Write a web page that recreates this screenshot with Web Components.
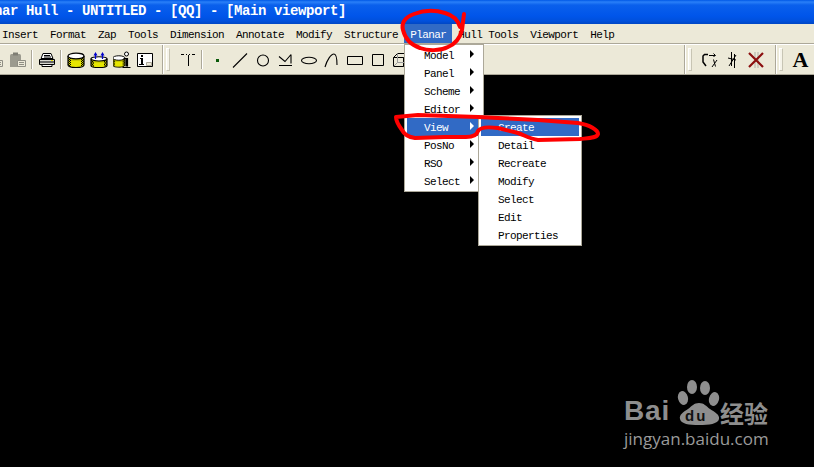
<!DOCTYPE html>
<html>
<head>
<meta charset="utf-8">
<style>
  html, body { margin: 0; height: 100%; background: #000; overflow: hidden; }
  body { font-family: "Liberation Mono", monospace; }
</style>
</head>
<body>
<app-window>
  <title-bar>nar Hull - UNTITLED - [QQ] - [Main viewport]</title-bar>
  <menu-bar>
    <menu-entry>Insert</menu-entry>
    <menu-entry>Format</menu-entry>
    <menu-entry>Zap</menu-entry>
    <menu-entry>Tools</menu-entry>
    <menu-entry>Dimension</menu-entry>
    <menu-entry>Annotate</menu-entry>
    <menu-entry>Modify</menu-entry>
    <menu-entry>Structure</menu-entry>
    <menu-entry active>Planar</menu-entry>
    <menu-entry>Hull Tools</menu-entry>
    <menu-entry>Viewport</menu-entry>
    <menu-entry>Help</menu-entry>
  </menu-bar>
  <tool-bar>
    <tool-icon name="paste"></tool-icon>
    <tool-icon name="paste"></tool-icon>
    <tool-sep></tool-sep>
    <tool-icon name="print"></tool-icon>
    <tool-sep></tool-sep>
    <tool-icon name="db"></tool-icon>
    <tool-icon name="dbarrows"></tool-icon>
    <tool-icon name="dbinfo"></tool-icon>
    <tool-icon name="info"></tool-icon>
    <tool-end style="width:20px"></tool-end>
    <tool-icon name="tee"></tool-icon>
    <tool-sep></tool-sep>
    <tool-icon name="dot"></tool-icon>
    <tool-icon name="line"></tool-icon>
    <tool-icon name="circle"></tool-icon>
    <tool-icon name="check"></tool-icon>
    <tool-icon name="ellipse"></tool-icon>
    <tool-icon name="arc"></tool-icon>
    <tool-icon name="rect"></tool-icon>
    <tool-icon name="square"></tool-icon>
    <tool-icon name="cube"></tool-icon>
    <tool-gap></tool-gap>
    <tool-end style="width:22px"></tool-end>
    <tool-icon name="rotate"></tool-icon>
    <tool-icon name="cross"></tool-icon>
    <tool-icon name="del"></tool-icon>
    <tool-end style="width:22px"></tool-end>
    <tool-icon name="text"></tool-icon>
  </tool-bar>

  <pop-menu style="left:404px;top:44px;width:80px">
    <pop-item arrow>Model</pop-item>
    <pop-item arrow>Panel</pop-item>
    <pop-item arrow>Scheme</pop-item>
    <pop-item arrow>Editor</pop-item>
    <pop-item arrow active>View</pop-item>
    <pop-item arrow>PosNo</pop-item>
    <pop-item arrow>RSO</pop-item>
    <pop-item arrow>Select</pop-item>
  </pop-menu>
  <pop-menu style="left:478px;top:115px;width:104px;padding-top:2px">
    <pop-item active>Create</pop-item>
    <pop-item>Detail</pop-item>
    <pop-item>Recreate</pop-item>
    <pop-item>Modify</pop-item>
    <pop-item>Select</pop-item>
    <pop-item>Edit</pop-item>
    <pop-item>Properties</pop-item>
  </pop-menu>

  <red-scribble></red-scribble>
  <baidu-mark></baidu-mark>
</app-window>

<script>
class AppWindow extends HTMLElement {
  constructor() {
    super();
    this.attachShadow({ mode: "open" });
    this.shadowRoot.innerHTML = `
      <style>
        :host { display: flex; flex-direction: column; position: relative; width: 814px; height: 467px; overflow: hidden; background: #000; }
      </style>
      <slot></slot>`;
  }
}

class TitleBar extends HTMLElement {
  constructor() {
    super();
    this.attachShadow({ mode: "open" });
    this.shadowRoot.innerHTML = `
      <style>
        :host {
          display: block; height: 24px; white-space: nowrap; overflow: hidden;
          text-indent: -6px; color: #fff; font: bold 14px/22px "Liberation Mono", monospace;
          letter-spacing: -.4px;
          background: linear-gradient(#0058e6 0, #2a80f8 2px, #0a60ec 5px, #0055ea 16px, #0050dc 21px, #0046c4 24px);
        }
      </style>
      <slot></slot>`;
  }
}

class MenuBar extends HTMLElement {
  constructor() {
    super();
    this.attachShadow({ mode: "open" });
    this.shadowRoot.innerHTML = `
      <style>
        :host { display: flex; height: 19px; margin-left: -4px; background: #ece9d8; border-bottom: 1px solid #aca899; }
      </style>
      <slot></slot>`;
  }
}

class MenuEntry extends HTMLElement {
  constructor() {
    super();
    this.attachShadow({ mode: "open" });
    this.shadowRoot.innerHTML = `
      <style>
        :host { display: block; padding: 0 6px; height: 19px; white-space: nowrap; color: #000; font: 11px/22px "Liberation Mono", monospace; letter-spacing: -.6px; }
        :host([active]) { background: #316ac5; color: #fff; }
      </style>
      <slot></slot>`;
  }
}

class ToolBar extends HTMLElement {
  constructor() {
    super();
    this.attachShadow({ mode: "open" });
    this.shadowRoot.innerHTML = `
      <style>
        :host { display: flex; align-items: center; height: 29px; padding-right: 2px; margin-left: -17px; background: #ece9d8; border-top: 1px solid #fff; border-bottom: 1px solid #aca899; }
      </style>
      <slot></slot>`;
  }
}

class ToolGap extends HTMLElement {
  constructor() {
    super();
    this.attachShadow({ mode: "open" });
    this.shadowRoot.innerHTML = `<style>:host { display: block; flex: 1; }</style>`;
  }
}

class ToolSep extends HTMLElement {
  constructor() {
    super();
    this.attachShadow({ mode: "open" });
    this.shadowRoot.innerHTML = `
      <style>
        :host { display: flex; justify-content: center; width: 6px; flex: none; }
        i { width: 1px; height: 19px; background: #aca899; border-right: 1px solid #fff; }
      </style>
      <i></i>`;
  }
}

// etched end of a toolbar group, followed by the grip of the next one
class ToolEnd extends HTMLElement {
  constructor() {
    super();
    this.attachShadow({ mode: "open" });
    this.shadowRoot.innerHTML = `
      <style>
        :host { display: flex; flex: none; justify-content: flex-end; align-self: stretch; align-items: center; }
        .edge { width: 1px; height: 29px; background: #aca899; border-right: 1px solid #fff; margin-right: 2px; }
        .grip { width: 2px; height: 21px; background: #f6f4ea; border: 1px solid #c8c5b4; border-left-color: #fff; border-top-color: #fff; margin-right: 6px; }
      </style>
      <div class="edge"></div><div class="grip"></div>`;
  }
}

const cyl = `
  <path d="M1 5v9c0 1.500 3.500 2.500 8 2.500s8-1 8-2.500V5z" fill="#e6e600"/>
  <path d="M1 6v8c0 1 1.500 1.700 3 2V6zM17 6v8c0 1-1.500 1.700-3 2V6z" fill="url(#dith)"/>
  <path d="M1 9h16" stroke="#000" stroke-opacity=".25"/>
  <path d="M1 5v9c0 1.500 3.500 2.500 8 2.500s8-1 8-2.500V5" fill="none" stroke="#000" stroke-width="1.200"/>
  <ellipse cx="9" cy="5" rx="8" ry="2.800" fill="#fff" stroke="#000" stroke-width="1.200"/>`;

const DEFS = `<defs><pattern id="dith" width="2" height="2" patternUnits="userSpaceOnUse"><rect width="2" height="2" fill="#d8d800"/><rect width="1" height="1" fill="#000"/><rect x="1" y="1" width="1" height="1" fill="#000"/></pattern></defs>`;

const ICONS = {
  paste: `<path d="M1 4.500q0-1.500 1.500-1.500h8q1.500 0 1.500 1.500V16H1z" fill="#9b9a8e"/><path d="M4 1.500h5v3H4z" fill="#7f7e74"/><path d="M8.500 9.500h8v6h-8z" fill="#ece9d8" stroke="#8f8e84"/><path d="M10 11.500h5M10 13.500h5" stroke="#8f8e84"/>`,
  print: `<path d="M5 2.500h8l2 5H3z" fill="#fff" stroke="#000"/><path d="M6 4.500h6M6 6h7" stroke="#000"/><path d="M1.500 8.500h15v5h-15z" fill="#d8d8d0" stroke="#000"/><path d="M2 11h14" stroke="#666" stroke-width="2"/><path d="M4 13.500h10v2H4z" fill="#fff" stroke="#000"/><path d="M13 9.500h2" stroke="#e6e600"/>`,
  db: DEFS + cyl,
  dbarrows: `${DEFS}<g transform="translate(0 4) scale(1 .76)">${cyl}</g><path d="M5.500 4v4M12.500 4v4" stroke="#00c" stroke-width="1.200"/><path d="M3.500 4.500L5.500 1l2 3.500zM10.500 4.500L12.500 1l2 3.500z" fill="#00c"/>`,
  dbinfo: `${DEFS}<g transform="translate(-1 3) scale(.76 .8)">${cyl}</g><circle cx="13.500" cy="3" r="2" fill="#fff" stroke="#000"/><path d="M10.500 7.500h4v8M9.500 16.500h8" fill="none" stroke="#000" stroke-width="1.200"/><path d="M13.500 7.500v8" stroke="#000" stroke-width="2"/>`,
  info: `<path d="M1.500 2.500h15v13h-15z" fill="#fff" stroke="#000"/><path d="M5 4h2v2H5zM4 7h3v6h1v1H3v-1h2V8H4z" fill="#000"/><path d="M10.500 11.500h5v3h-5z" fill="#ece9d8" stroke="#aca899"/>`,
  tee: `<path d="M2 3.500h3M7 3.500h1M10 3.500h1M13 3.500h3" stroke="#000"/><path d="M9.500 4v11" stroke="#000"/>`,
  dot: `<path d="M8 8h3v3H8z" fill="#0a5a0a"/>`,
  line: `<path d="M2 16.500L16 2.500" stroke="#000" stroke-width="1.100"/>`,
  circle: `<circle cx="9" cy="9.500" r="5.500" fill="none" stroke="#000" stroke-width="1.100"/>`,
  check: `<path d="M2 5.500l6 5 6-7M14 3.500v9M2 14.500h13" fill="none" stroke="#000" stroke-width="1.100"/>`,
  ellipse: `<ellipse cx="9" cy="9.500" rx="7.500" ry="3.200" fill="none" stroke="#000" stroke-width="1.100"/>`,
  arc: `<path d="M2 16C4 9 8 3 11 3c3 0 3 6 3 11" fill="none" stroke="#000" stroke-width="1.100"/>`,
  rect: `<path d="M1.500 5.500h15v8h-15z" fill="none" stroke="#000"/>`,
  square: `<path d="M3.500 3.500h11v11h-11z" fill="none" stroke="#000"/>`,
  cube: `<path d="M1.500 6.500h10v9h-10zM1.500 6.500l4-4h10v9l-4 4M11.500 6.500l4-4" fill="none" stroke="#000"/><path d="M1.500 15.500l4-4h10M5.500 2.500v9" fill="none" stroke="#999"/>`,
  rotate: `<path d="M7 3.500H3.500L2 5v6l3 4" fill="none" stroke="#000" stroke-width="1.500"/><path d="M8 4.500h6M12.500 2.500l2 2-2 1" fill="none" stroke="#000"/><path d="M11 16l5-7M12.500 8.500l2 7" fill="none" stroke="#000"/>`,
  cross: `<path d="M5 15L12 4M7.500 1v14M10.500 3v14M4 7l8 2" fill="none" stroke="#000"/>`,
  del: `<path d="M8 1v16M11 1v16" stroke="#c4c2b6" stroke-width="1.500"/><path d="M2 2l14 14M16 2L2 16" stroke="#8c0f0f" stroke-width="2.200"/>`,
};

class ToolIcon extends HTMLElement {
  constructor() {
    super();
    this.attachShadow({ mode: "open" });
  }

  connectedCallback() {
    const name = this.getAttribute("name");
    const body = name === "text"
      ? `<span>A</span>`
      : `<svg width="18" height="18" viewBox="0 0 18 18">${ICONS[name]}</svg>`;
    this.shadowRoot.innerHTML = `
      <style>
        :host { display: flex; flex: none; width: 23px; height: 18px; align-items: center; justify-content: center; }
        svg { display: block; }
        span { font: bold 22px/18px "Liberation Serif", serif; color: #000; }
      </style>
      ${body}`;
  }
}

class PopMenu extends HTMLElement {
  constructor() {
    super();
    this.attachShadow({ mode: "open" });
    this.shadowRoot.innerHTML = `
      <style>
        :host { display: flex; flex-direction: column; position: absolute; box-sizing: border-box; padding: 1px; background: #fff; border: 1px solid #aca899; }
      </style>
      <slot></slot>`;
  }
}

class PopItem extends HTMLElement {
  constructor() {
    super();
    this.attachShadow({ mode: "open" });
    this.shadowRoot.innerHTML = `
      <style>
        :host { display: flex; align-items: center; justify-content: space-between; box-sizing: border-box; height: 18px; padding: 2px 7px 0 17px; margin: 0 1px; color: #000; background: #fff; font: 11px/16px "Liberation Mono", monospace; letter-spacing: -.6px; white-space: nowrap; }
        :host([active]) { background: #316ac5; color: #fff; }
        i { display: none; width: 0; height: 0; border-left: 4px solid currentColor; border-top: 4px solid transparent; border-bottom: 4px solid transparent; margin-top: -4px; }
        :host([arrow]) i { display: block; }
      </style>
      <slot></slot><i></i>`;
  }
}

// the hand drawn red marks lie over everything
class RedScribble extends HTMLElement {
  constructor() {
    super();
    this.attachShadow({ mode: "open" });
    this.shadowRoot.innerHTML = `
      <style>
        :host { position: absolute; left: 0; top: 0; display: block; width: 814px; height: 467px; pointer-events: none; }
        svg { display: block; }
      </style>
      <svg width="814" height="467" viewBox="0 0 814 467" fill="none" stroke="#f00" stroke-linecap="round" stroke-linejoin="round">
        <path stroke-width="4" d="M464 14L462 30C460 38 455 44 448 47C440 51 428 51 420 48C411 45 405 38 403 30C401 22 406 17 414 14C424 10 436 10 445 13C452 15 458 20 460 27"/>
        <path stroke-width="4" d="M396 117L418 115L478 117L498 118L538 120L578 123C590 125 598 130 598 134C597 138 590 138 580 139L538 140C530 139 524 135 518 133L498 128C490 127 480 127 478 131C477 135 474 137 466 137L445 137L415 138C408 137 404 134 402 130C399 126 396 122 396 117Z"/>
      </svg>`;
  }
}

class BaiduMark extends HTMLElement {
  constructor() {
    super();
    this.attachShadow({ mode: "open" });
    this.shadowRoot.innerHTML = `
      <style>
        :host { position: absolute; left: 624px; top: 378px; display: flex; flex-direction: column; width: 150px; color: #8e8e8e; }
        .row { display: flex; align-items: flex-end; height: 48px; }
        .bai { font: bold 28px/30px "Liberation Sans", sans-serif; letter-spacing: .8px; }
        .paw { position: relative; width: 46px; height: 48px; flex: none; margin-left: 4px; }
        .paw svg { display: block; }
        .du { position: absolute; left: 11px; top: 30px; font: bold 15px/16px "Liberation Sans", sans-serif; letter-spacing: 2px; color: #111; }
        .cn { font: 600 24px/26px "Noto Sans CJK SC", sans-serif; white-space: nowrap; }
        .url { font: 17px/20px "Open Sans", sans-serif; color: #9a9a9a; margin-top: 3px; white-space: nowrap; }
      </style>
      <div class="row">
        <span class="bai">Bai</span>
        <div class="paw">
          <svg width="46" height="48" viewBox="0 0 46 48" fill="#8e8e8e">
            <ellipse cx="18" cy="9" rx="5" ry="7"/>
            <ellipse cx="31" cy="10" rx="5" ry="7"/>
            <ellipse cx="9" cy="20" rx="5" ry="7" transform="rotate(-15 9 20)"/>
            <ellipse cx="40" cy="21" rx="5" ry="7" transform="rotate(15 40 21)"/>
            <path d="M25 25C30 25 32 28 36 31C41 34 46 37 45 41C44 46 35 47 25 47C15 47 7 46 6 41C5 37 9 34 14 31C18 28 20 25 25 25Z"/>
          </svg>
          <span class="du">du</span>
        </div>
        <span class="cn">经验</span>
      </div>
      <span class="url">jingyan.baidu.com</span>`;
  }
}

customElements.define("app-window", AppWindow);
customElements.define("title-bar", TitleBar);
customElements.define("menu-bar", MenuBar);
customElements.define("menu-entry", MenuEntry);
customElements.define("tool-bar", ToolBar);
customElements.define("tool-gap", ToolGap);
customElements.define("tool-sep", ToolSep);
customElements.define("tool-end", ToolEnd);
customElements.define("tool-icon", ToolIcon);
customElements.define("pop-menu", PopMenu);
customElements.define("pop-item", PopItem);
customElements.define("red-scribble", RedScribble);
customElements.define("baidu-mark", BaiduMark);
</script>
</body>
</html>
